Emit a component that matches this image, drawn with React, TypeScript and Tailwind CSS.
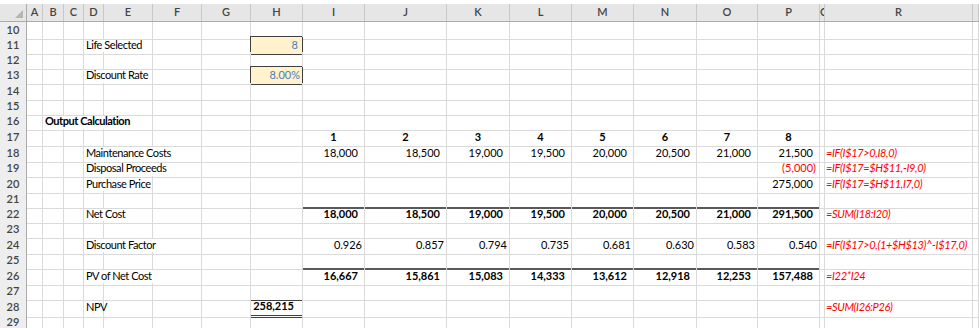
import React from 'react';

type Cell = { t?: string; c?: string };
type Row = { n: number; h: string; cells?: Record<string, Cell> };

const cols = ['A', 'B', 'C', 'D', 'E', 'F', 'G', 'H', 'I', 'J', 'K', 'L', 'M', 'N', 'O', 'P', 'Q', 'R', 'X'];
const yearCols = ['I', 'J', 'K', 'L', 'M', 'N', 'O', 'P'];

const gridCls =
    'grid grid-cols-[27px_16px_21px_20px_20px_49px_49px_49px_52px_62px_82px_63px_62px_62px_63px_61px_62px_5px_148px_1fr]';

// cell style presets
const hide = 'border-r-transparent';
const label = 'border-r-transparent tracking-[-0.45px]';
const num = 'justify-end pr-[6px]';
const dec = 'justify-end pr-[2px]';
const red = 'text-[#ff0000] italic pl-[1px] tracking-[-0.35px]';
const input = 'bg-[#fff2cc] text-[#4a7ebb] justify-end border-r-[#3f3f3f] border-b-[#3f3f3f] shadow-[-1px_-1px_0_0_#3f3f3f]';
const rule = 'border-b-2 border-b-[#595959]';

const spread = (vals: string[], c: string): Record<string, Cell> =>
    Object.fromEntries(yearCols.map((k, i) => [k, { t: vals[i], c }]));

const rowsData: Row[] = [
    { n: 10, h: 'h-[15px]' },
    { n: 11, h: 'h-[15px]', cells: { D: { t: 'Life Selected', c: label }, H: { t: '8', c: `${input} pr-[4px]` } } },
    { n: 12, h: 'h-[15px]' },
    { n: 13, h: 'h-[16px]', cells: { D: { t: 'Discount Rate', c: label }, H: { t: '8.00%', c: `${input} pr-[2px]` } } },
    { n: 14, h: 'h-[15px]' },
    { n: 15, h: 'h-[15px]' },
    {
        n: 16,
        h: 'h-[16px]',
        cells: { B: { t: 'Output Calculation', c: `${label} font-bold` }, C: { c: hide }, D: { c: hide } },
    },
    { n: 17, h: 'h-[16px]', cells: spread(['1', '2', '3', '4', '5', '6', '7', '8'], 'justify-center font-bold') },
    {
        n: 18,
        h: 'h-[15px]',
        cells: {
            D: { t: 'Maintenance Costs', c: label },
            E: { c: hide },
            ...spread(['18,000', '18,500', '19,000', '19,500', '20,000', '20,500', '21,000', '21,500'], num),
            R: { t: '=IF(I$17>0,I8,0)', c: red },
        },
    },
    {
        n: 19,
        h: 'h-[16px]',
        cells: {
            D: { t: 'Disposal Proceeds', c: label },
            E: { c: hide },
            P: { t: '(5,000)', c: 'justify-end pr-[3px] text-[#ff0000]' },
            R: { t: '=IF(I$17=$H$11,-I9,0)', c: red },
        },
    },
    {
        n: 20,
        h: 'h-[15px]',
        cells: {
            D: { t: 'Purchase Price', c: label },
            P: { t: '275,000', c: num },
            R: { t: '=IF(I$17=$H$11,I7,0)', c: red },
        },
    },
    { n: 21, h: 'h-[15px]', cells: spread(['', '', '', '', '', '', '', ''], rule) },
    {
        n: 22,
        h: 'h-[15px]',
        cells: {
            D: { t: 'Net Cost', c: label },
            ...spread(['18,000', '18,500', '19,000', '19,500', '20,000', '20,500', '21,000', '291,500'], `${num} font-bold`),
            R: { t: '=SUM(I18:I20)', c: red },
        },
    },
    { n: 23, h: 'h-[16px]' },
    {
        n: 24,
        h: 'h-[15px]',
        cells: {
            D: { t: 'Discount Factor', c: label },
            E: { c: hide },
            ...spread(['0.926', '0.857', '0.794', '0.735', '0.681', '0.630', '0.583', '0.540'], dec),
            R: { t: '=IF(I$17>0,(1+$H$13)^-I$17,0)', c: red },
        },
    },
    { n: 25, h: 'h-[16px]', cells: spread(['', '', '', '', '', '', '', ''], rule) },
    {
        n: 26,
        h: 'h-[15px]',
        cells: {
            D: { t: 'PV of Net Cost', c: label },
            E: { c: hide },
            ...spread(['16,667', '15,861', '15,083', '14,333', '13,612', '12,918', '12,253', '157,488'], `${num} font-bold`),
            R: { t: '=I22*I24', c: red },
        },
    },
    { n: 27, h: 'h-[15px]', cells: { H: { c: 'border-b-[#3f3f3f]' } } },
    {
        n: 28,
        h: 'h-[16px]',
        cells: {
            D: { t: 'NPV', c: 'tracking-[-0.45px]' },
            H: { t: '258,215', c: 'justify-end pr-[8px] font-bold border-b-[3px] border-double border-b-[#3f3f3f]' },
            R: { t: '=SUM(I26:P26)', c: red },
        },
    },
    { n: 29, h: 'h-[15px]' },
];

const App = () => {
    return (
        <div className="h-[328px] w-[979px] overflow-hidden bg-white font-['Lato','Liberation_Sans',sans-serif] text-[11px] text-black">
            {/* Column headers */}
            <div className="pt-[4px]">
                <div className={`${gridCls} h-[18px] bg-[#e6e6e6] border-b border-[#ababab]`}>
                    <div className="relative border-r border-[#ababab]">
                        <svg className="absolute right-[3px] bottom-[3px]" width="8" height="8" viewBox="0 0 8 8">
                            <polygon points="8,0 8,8 0,8" fill="#b5b5b5" />
                        </svg>
                    </div>
                    {cols.map((c) => (
                        <div
                            key={c}
                            className={`flex items-center overflow-hidden border-r border-[#c8c8c8] font-semibold text-[#444] ${c === 'Q' ? 'justify-start' : 'justify-center'
                                }`}
                        >
                            {c === 'X' ? '' : c}
                        </div>
                    ))}
                </div>
            </div>

            {/* Rows */}
            {rowsData.map((row) => (
                <div key={row.n} className={`${gridCls} ${row.h}`}>
                    <div className="flex items-center justify-center bg-[#eeeeee] border-r border-b border-r-[#ababab] border-b-[#d0d0d0] font-semibold text-[#444]">
                        {row.n}
                    </div>
                    {cols.map((c) => {
                        const cell = row.cells?.[c];
                        return (
                            <div
                                key={c}
                                className={`flex items-center whitespace-nowrap border-r border-b border-[#dadada] px-[2px] ${cell?.c ?? ''
                                    }`}
                            >
                                {cell?.t}
                            </div>
                        );
                    })}
                </div>
            ))}
        </div>
    );
};

export default App;
